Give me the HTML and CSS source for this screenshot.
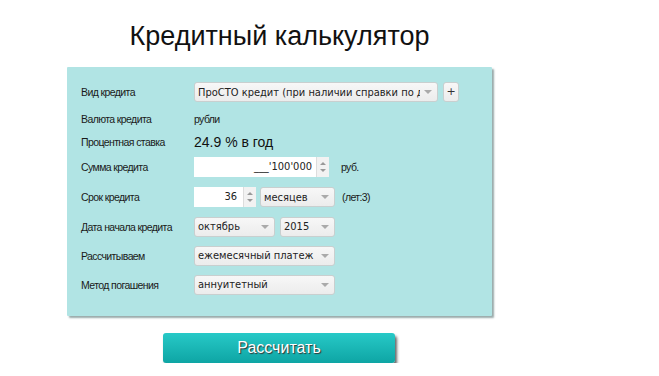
FILE: index.html
```html
<!DOCTYPE html>
<html>
<head>
<meta charset="utf-8" />
<title>Кредитный калькулятор</title>
<link rel="stylesheet" href="styles.css">
</head>
<body>
	<div id="main">
		<h1 class="title">Кредитный калькулятор</h1>
		<div id="calc">
			<div class="row row_kind">
				<div class="label">Вид кредита</div>
				<div class="sel sel_kind"><span class="txt">ПроСТО кредит (при наличии справки по доходам)</span><span class="arr"></span></div>
				<div class="btn_add">+</div>
			</div>
			<div class="row row_cur">
				<div class="label">Валюта кредита</div>
				<div class="val">рубли</div>
			</div>
			<div class="row row_rate">
				<div class="label">Процентная ставка</div>
				<div class="rate">24.9 % в год</div>
			</div>
			<div class="row row_sum">
				<div class="label">Сумма кредита</div>
				<div class="num num_sum"><span class="txt">___'100'000</span><span class="spin"><i class="up"></i><i class="down"></i></span></div>
				<div class="unit">руб.</div>
			</div>
			<div class="row row_term">
				<div class="label">Срок кредита</div>
				<div class="num num_term"><span class="txt">36</span><span class="spin"><i class="up"></i><i class="down"></i></span></div>
				<div class="sel sel_period"><span class="txt">месяцев</span><span class="arr"></span></div>
				<div class="unit unit_term">(лет:3)</div>
			</div>
			<div class="row">
				<div class="label">Дата начала кредита</div>
				<div class="sel sel_month"><span class="txt">октябрь</span><span class="arr"></span></div>
				<div class="sel sel_year"><span class="txt">2015</span><span class="arr"></span></div>
			</div>
			<div class="row">
				<div class="label">Рассчитываем</div>
				<div class="sel sel_wide"><span class="txt">ежемесячный платеж</span><span class="arr"></span></div>
			</div>
			<div class="row">
				<div class="label">Метод погашения</div>
				<div class="sel sel_wide"><span class="txt">аннуитетный</span><span class="arr"></span></div>
			</div>
		</div>
		<div class="go">
			<div class="btn_go">Рассчитать</div>
		</div>
	</div>
</body>
</html>
```

FILE: styles.css
```css
* {
    margin: 0;
    padding: 0;
}

body {
    background-color: #fff;
    font-family: "Liberation Sans", Arial, sans-serif;
    color: #111;
}

#main {
    width: 425px;
    margin-left: 67px;
}

.title {
    height: 67px;
    padding-top: 21px;
    box-sizing: border-box;
    font-size: 27px;
    font-weight: normal;
    line-height: 30px;
    text-align: center;
    color: #111;
}

#calc {
    background-color: #b1e4e4;
    padding: 11px 0 17px 14px;
    box-shadow: 2px 2px 2px #9aa;
    border-radius: 1px;
}

.row {
    height: 29px;
    display: flex;
    align-items: center;
}

.row_kind {
    height: 28px;
}

.row_cur {
    height: 26px;
}

.row_rate {
    height: 20px;
}

.row_sum, .row_term {
    height: 30px;
}

.label, .val, .unit {
    font-size: 10.5px;
    letter-spacing: -0.6px;
    color: #1a1a1a;
}

.label {
    width: 113px;
    flex: none;
}

.rate {
    font-size: 14px;
    color: #111;
}

.sel {
    height: 20px;
    box-sizing: border-box;
    border: 1px solid #c9cfcf;
    border-radius: 3px;
    background: linear-gradient(#f7f7f7, #ececec);
    display: flex;
    align-items: center;
    padding-left: 3px;
    font-family: "DejaVu Sans", Verdana, sans-serif;
    font-size: 11px;
    font-stretch: condensed;
    color: #222;
    overflow: hidden;
}

.sel .txt {
    flex: 1;
    white-space: nowrap;
    overflow: hidden;
}

.sel .arr {
    flex: none;
    width: 0;
    height: 0;
    margin: 0 5px 0 4px;
    border-left: 4px solid transparent;
    border-right: 4px solid transparent;
    border-top: 4px solid #aaa;
}

.sel_kind {
    width: 244px;
}

.sel_period {
    width: 75px;
    margin-left: 4px;
}

.sel_month {
    width: 81px;
}

.sel_year {
    width: 55px;
    margin-left: 5px;
}

.sel_wide {
    width: 141px;
}

.btn_add {
    width: 16px;
    height: 20px;
    box-sizing: border-box;
    margin-left: 5px;
    border: 1px solid #c9cfcf;
    border-radius: 3px;
    background: linear-gradient(#f7f7f7, #ececec);
    font-family: "DejaVu Sans", Verdana, sans-serif;
    font-size: 11px;
    line-height: 18px;
    text-align: center;
    color: #333;
}

.num {
    height: 20px;
    box-sizing: border-box;
    background-color: #fff;
    display: flex;
    font-family: "DejaVu Sans", Verdana, sans-serif;
    font-size: 11px;
    font-stretch: condensed;
    color: #222;
}

.num .txt {
    flex: 1;
    text-align: right;
    line-height: 20px;
    padding-right: 4px;
}

.num_sum {
    width: 135px;
}

.num_term {
    width: 62px;
}

.num_term .txt {
    padding-right: 6px;
}

.spin {
    width: 12px;
    flex: none;
    background-color: #f2f2f2;
    border-left: 1px solid #ddd;
    display: flex;
    flex-direction: column;
    align-items: center;
    justify-content: center;
    gap: 4px;
}

.spin i {
    display: block;
    width: 0;
    height: 0;
    border-left: 3px solid transparent;
    border-right: 3px solid transparent;
}

.spin .up {
    border-bottom: 3px solid #999;
}

.spin .down {
    border-top: 3px solid #999;
}

.unit {
    margin-left: 12px;
}

.unit_term {
    margin-left: 7px;
}

.go {
    padding: 17px 0 0 96px;
}

.btn_go {
    width: 232px;
    height: 30px;
    border-radius: 3px;
    background: linear-gradient(#27c9c7, #0ea5a4);
    box-shadow: 2px 3px 3px #666;
    color: #fff;
    font-size: 16px;
    line-height: 30px;
    text-align: center;
    text-shadow: 1px 1px 1px #333;
}
```
